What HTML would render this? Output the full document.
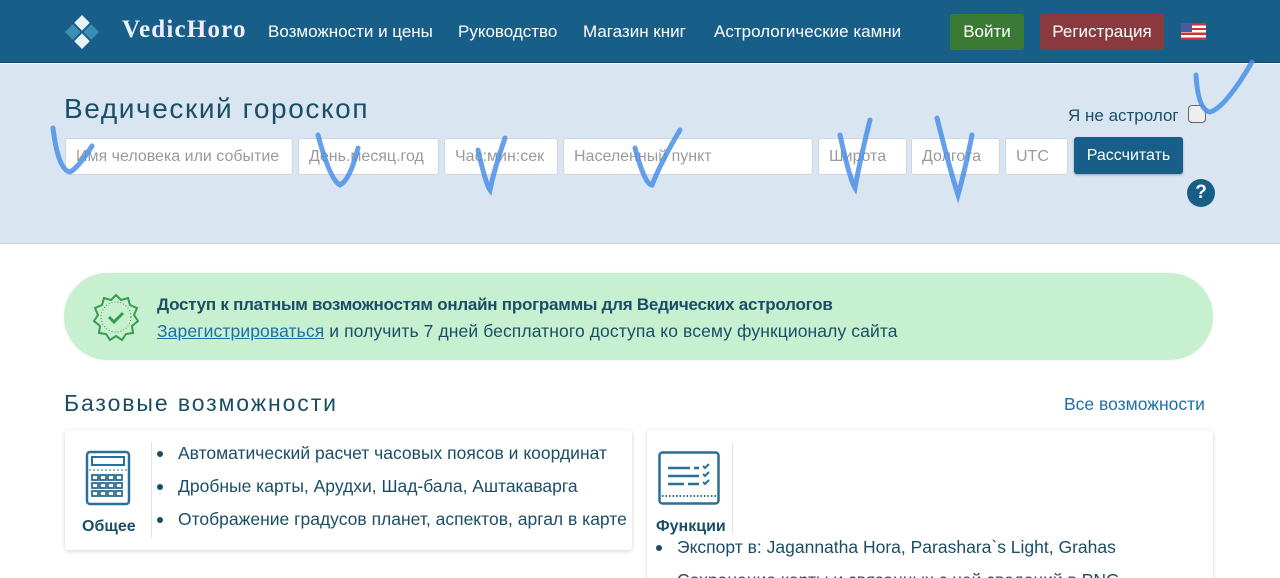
<!DOCTYPE html>
<html><head><meta charset="utf-8"><style>
*{box-sizing:border-box;margin:0;padding:0}
html,body{width:1280px;height:578px;overflow:hidden}
body{background:#fff;font-family:"Liberation Sans",sans-serif;position:relative;color:#1a4e66}
.hdr{position:absolute;left:0;top:0;width:1280px;height:63px;background:#175f89;border-bottom:1px solid #0f4a6c}
.hdr .logo{position:absolute;left:122px;top:16px;font-family:"Liberation Serif",serif;font-size:25px;font-weight:bold;color:#eef;letter-spacing:1.2px}
.nav{position:absolute;top:22px;color:#fff;font-size:17px}
.btn{position:absolute;top:14px;height:36px;border-radius:3px;color:#fff;font-size:17px;text-align:center;line-height:36px}
.panel{position:absolute;left:0;top:64px;width:1280px;height:180px;background:#d9e6f2;border-bottom:1px solid #c8d3de}
.inp{position:absolute;top:138px;height:37px;background:#fff;border:1px solid #d0d6dc;border-radius:3px;color:#9a9a9a;font-size:16px;line-height:35px;padding-left:10px}
.card{position:absolute;background:#fff;box-shadow:0 1px 4px rgba(0,0,0,.18);border-radius:3px}
li{list-style:none;position:relative;padding-left:24px;font-size:17.5px;color:#1a4e66;white-space:nowrap}
li:before{content:"";position:absolute;left:3px;top:8px;width:6px;height:6px;border-radius:50%;background:#1a4e66}
</style></head><body>
<div class="hdr">
<svg style="position:absolute;left:64px;top:14px" width="36" height="36" viewBox="0 0 36 36"><g transform="rotate(45 18 18)"><rect x="6" y="6" width="11" height="11" fill="#e8f2f7"/><rect x="19" y="6" width="11" height="11" fill="#3a8fb0"/><rect x="6" y="19" width="11" height="11" fill="#3a8fb0"/><rect x="19" y="19" width="11" height="11" fill="#e8f2f7"/></g></svg>
<div class="logo">VedicHoro</div>
<div class="nav" style="left:268px">Возможности и цены</div>
<div class="nav" style="left:458px">Руководство</div>
<div class="nav" style="left:583px">Магазин книг</div>
<div class="nav" style="left:714px">Астрологические камни</div>
<div class="btn" style="left:950px;width:74px;background:#3a7a35">Войти</div>
<div class="btn" style="left:1040px;width:124px;background:#8a3a3e">Регистрация</div>
<div style="position:absolute;left:1181px;top:23px;width:25px;height:17px;background:repeating-linear-gradient(#c33 0 2.4px,#fff 2.4px 4.8px)"><div style="width:11px;height:9px;background:#4a5aa0"></div></div>
</div>
<div class="panel">
<div style="position:absolute;left:64px;top:29px;font-size:28px;letter-spacing:1.6px;color:#1a4e66">Ведический гороскоп</div>
<div style="position:absolute;left:1068px;top:42px;font-size:17px">Я не астролог</div>
<div style="position:absolute;left:1188px;top:41px;width:18px;height:18px;border:1px solid #666;border-radius:4px;background:#eee"></div>
<div style="position:absolute;left:1074px;top:73px;width:109px;height:37px;background:#175f89;border-radius:3px;color:#fff;font-size:16px;text-align:center;line-height:37px;box-shadow:0 1px 2px rgba(0,0,0,.3)">Рассчитать</div>
<div style="position:absolute;left:1187px;top:115px;width:28px;height:28px;border-radius:50%;background:#175f89;color:#fff;font-weight:bold;font-size:19px;text-align:center;line-height:28px">?</div>
</div>
<div class="inp" style="left:65px;width:228px">Имя человека или событие</div>
<div class="inp" style="left:298px;width:141px">День.месяц.год</div>
<div class="inp" style="left:444px;width:114px">Час:мин:сек</div>
<div class="inp" style="left:563px;width:250px">Населенный пункт</div>
<div class="inp" style="left:818px;width:89px">Широта</div>
<div class="inp" style="left:911px;width:89px">Долгота</div>
<div class="inp" style="left:1005px;width:63px">UTC</div>
<svg style="position:absolute;left:0;top:0" width="1280" height="250"><g fill="none" stroke="#4a8fe6" stroke-width="5" stroke-linecap="round" opacity=".85">
<path d="M53 128 Q58 170 70 172 Q78 168 92 146"/>
<path d="M318 135 Q330 180 340 185 Q350 180 358 148"/>
<path d="M478 150 Q486 185 490 190 Q494 170 505 138"/>
<path d="M635 148 Q645 185 652 185 Q662 160 680 130"/>
<path d="M840 135 Q850 180 855 188 Q860 160 870 120"/>
<path d="M937 118 Q950 170 958 195 Q965 170 972 135"/>
<path d="M1196 75 Q1198 110 1210 112 Q1225 108 1252 62"/>
</g></svg>
<div style="position:absolute;left:64px;top:273px;width:1149px;height:87px;background:#c7f0d0;border-radius:44px;box-shadow:0 0 3px rgba(0,0,0,.08)">
<svg style="position:absolute;left:28px;top:20px" width="48" height="48" viewBox="0 0 48 48"><polygon points="24,2 29,7 36,5 38,12 45,15 42,22 46,28 40,33 41,40 34,41 30,47 24,43 18,47 14,41 7,40 8,33 2,28 6,22 3,15 10,12 12,5 19,7" fill="none" stroke="#3a9a50" stroke-width="2"/><circle cx="24" cy="24" r="15" fill="none" stroke="#3a9a50" stroke-width="1" stroke-dasharray="1 2"/><path d="M17 24l5 5 9-9" fill="none" stroke="#3a9a50" stroke-width="3"/></svg>
<div style="position:absolute;left:93px;top:22px;font-size:17px;font-weight:bold;color:#1a4e66;letter-spacing:-0.25px">Доступ к платным возможностям онлайн программы для Ведических астрологов</div>
<div style="position:absolute;left:93px;top:48px;font-size:17.5px;color:#1a4e66;letter-spacing:0.1px"><span style="color:#1d6fa5;text-decoration:underline">Зарегистрироваться</span> и получить 7 дней бесплатного доступа ко всему функционалу сайта</div>
</div>
<div style="position:absolute;left:64px;top:390px;font-size:23px;letter-spacing:1.9px;color:#1a4e66">Базовые возможности</div>
<div style="position:absolute;left:1064px;top:394px;font-size:17.5px;color:#1d6fa5">Все возможности</div>
<div class="card" style="left:65px;top:430px;width:567px;height:120px">
<svg style="position:absolute;left:20px;top:20px" width="46" height="56" viewBox="0 0 46 56"><rect x="2" y="2" width="42" height="52" rx="3" fill="none" stroke="#2a6f95" stroke-width="2.5"/><rect x="7" y="7" width="32" height="8" fill="none" stroke="#2a6f95" stroke-width="2"/><line x1="4" y1="20" x2="42" y2="20" stroke="#2a6f95" stroke-dasharray="2 2"/><g fill="none" stroke="#2a6f95" stroke-width="1.8"><rect x="7" y="25" width="6" height="5"/><rect x="15" y="25" width="6" height="5"/><rect x="23" y="25" width="6" height="5"/><rect x="31" y="25" width="6" height="5"/><rect x="7" y="33" width="6" height="5"/><rect x="15" y="33" width="6" height="5"/><rect x="23" y="33" width="6" height="5"/><rect x="31" y="33" width="6" height="5"/><rect x="7" y="41" width="6" height="5"/><rect x="15" y="41" width="6" height="5"/><rect x="23" y="41" width="6" height="5"/><rect x="31" y="41" width="6" height="5"/></g></svg>
<div style="position:absolute;left:17px;top:88px;font-size:16px;font-weight:bold;color:#1a4e66">Общее</div>
<div style="position:absolute;left:86px;top:12px;width:1px;height:96px;background:#e4e4e4"></div>
<ul style="position:absolute;left:89px;top:13px"><li style="margin-bottom:12px">Автоматический расчет часовых поясов и координат</li><li style="margin-bottom:12px">Дробные карты, Арудхи, Шад-бала, Аштакаварга</li><li>Отображение градусов планет, аспектов, аргал в карте</li></ul>
</div>
<div class="card" style="left:647px;top:430px;width:566px;height:160px">
<svg style="position:absolute;left:11px;top:21px" width="62" height="54" viewBox="0 0 62 54"><rect x="1.5" y="1.5" width="59" height="51" rx="3" fill="none" stroke="#2a6f95" stroke-width="2.5"/><g stroke="#2a6f95" stroke-width="2.5"><line x1="10" y1="17" x2="32" y2="17"/><line x1="36" y1="17" x2="41" y2="17"/><line x1="10" y1="25" x2="41" y2="25"/><line x1="10" y1="33" x2="26" y2="33"/><line x1="30" y1="33" x2="41" y2="33"/></g><g fill="none" stroke="#2a6f95" stroke-width="2"><path d="M45 15l2 2 4-4M45 23l2 2 4-4M45 31l2 2 4-4"/></g><line x1="4" y1="45" x2="58" y2="45" stroke="#2a6f95" stroke-width="2" stroke-dasharray="1.5 2"/></svg>
<div style="position:absolute;left:9px;top:88px;font-size:16px;font-weight:bold;color:#1a4e66">Функции</div>
<div style="position:absolute;left:85px;top:12px;width:1px;height:92px;background:#e4e4e4"></div>
<ul style="position:absolute;left:6px;top:107px"><li style="margin-bottom:12px">Экспорт в: Jagannatha Hora, Parashara`s Light, Grahas</li><li>Сохранение карты и связанных с ней сведений в PNG</li></ul>
</div>
</body></html>
